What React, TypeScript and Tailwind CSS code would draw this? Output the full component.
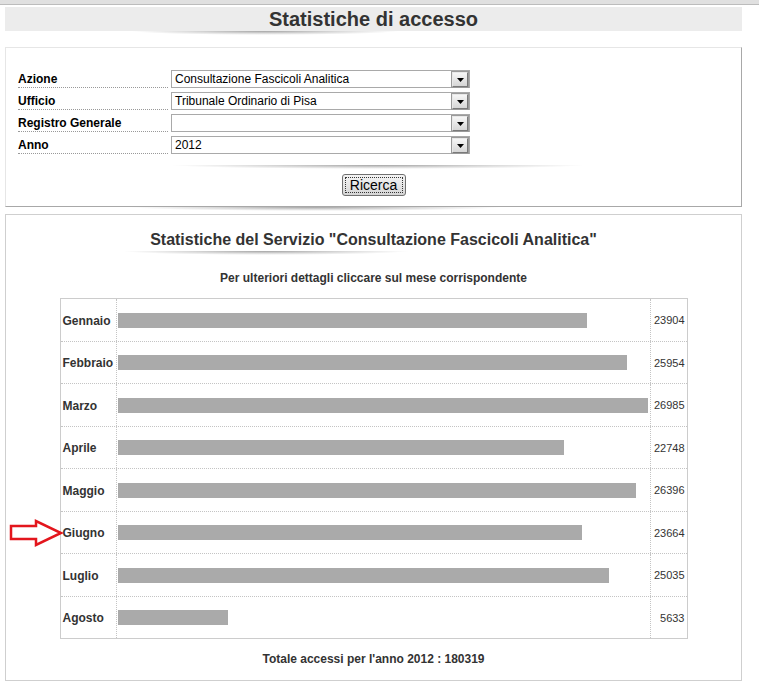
import React from "react";

const months = [
  { name: "Gennaio", value: 23904 },
  { name: "Febbraio", value: 25954 },
  { name: "Marzo", value: 26985 },
  { name: "Aprile", value: 22748 },
  { name: "Maggio", value: 26396 },
  { name: "Giugno", value: 23664 },
  { name: "Luglio", value: 25035 },
  { name: "Agosto", value: 5633 },
];

// row heights so the pitch matches the original table (~42.4px)
const rowHeights = ["h-[42px]", "h-[42px]", "h-[43px]", "h-[42px]", "h-[43px]", "h-[42px]", "h-[43px]", "h-[42px]"];

const maxValue = Math.max(...months.map((m) => m.value));
const total = months.reduce((s, m) => s + m.value, 0);

function Shadow({ className }: { className: string }) {
  return (
    <div
      className={
        "h-[4px] bg-[radial-gradient(ellipse_at_top,rgba(0,0,0,0.36)_0%,rgba(0,0,0,0.14)_40%,transparent_70%)] " +
        className
      }
    />
  );
}

function Select({ value }: { value: string }) {
  return (
    <div className="flex h-[18px] w-[299px] items-center border border-[#a9a9a9] bg-white">
      <span className="flex-1 pl-[3px] text-[12px] leading-none text-black">{value}</span>
      <span className="mr-px flex h-[15px] w-[16px] items-end justify-center border border-t-[#e8e8e8] border-l-[#e8e8e8] border-r-[#7a7a7a] border-b-[#7a7a7a] bg-[linear-gradient(#f6f6f6,#d6d6d6)] pb-[4px] outline outline-1 outline-[#9a9a9a]">
        <svg width="7" height="4" viewBox="0 0 7 4">
          <path d="M0 0H7L3.5 4Z" fill="#000" />
        </svg>
      </span>
    </div>
  );
}

function FormRow({ label, value }: { label: string; value: string }) {
  return (
    <div className="flex h-[22px] items-start">
      <div className="flex h-[18px] w-[150px] items-center border-b border-dotted border-[#999] pt-px text-[12px] font-bold text-black">
        {label}
      </div>
      <div className="ml-[3px]">
        <Select value={value} />
      </div>
    </div>
  );
}

export default function App() {
  return (
    <div className="min-h-[691px] w-[759px] bg-white font-['Liberation_Sans',Arial,sans-serif] text-[#333]">
      <div className="h-[5px] border-b border-[#bcbcbc] bg-[#e0e0e0]" />

      <div className="ml-[5px] w-[737px]">
        <div className="mt-[2px] flex h-[24px] items-center justify-center bg-[#ececec]">
          <h1 className="text-[20px] font-bold text-[#333]">Statistiche di accesso</h1>
        </div>
        <Shadow className="ml-[125px] w-[270px]" />

        {/* form */}
        <div className="mt-[12px] border border-t-[#e6e6e6] border-l-[#e6e6e6] border-r-[#a8a8a8] border-b-[#a8a8a8] pl-[12px] pt-[22px] pb-[10px]">
          <FormRow label="Azione" value="Consultazione Fascicoli Analitica" />
          <FormRow label="Ufficio" value="Tribunale Ordinario di Pisa" />
          <FormRow label="Registro Generale" value="" />
          <FormRow label="Anno" value="2012" />
          <Shadow className="ml-[150px] mt-[7px] w-[420px]" />
          <div className="mt-[5px] flex justify-center pr-[12px]">
            <button className="flex h-[22px] w-[64px] items-center justify-center rounded-[3px] border border-[#707070] bg-[linear-gradient(#f3f3f3,#e6e6e6_50%,#d5d5d5)] p-[2px]">
              <span className="flex h-full w-full items-center justify-center border border-dotted border-[#333] text-[14px] leading-none text-black">
                Ricerca
              </span>
            </button>
          </div>
        </div>
        <Shadow className="ml-[120px] w-[380px]" />

        {/* stats */}
        <div className="mt-[3px] border border-[#cfcfcf] pt-[15px] pb-[13px]">
          <h2 className="text-center text-[16px] leading-[20px] font-bold text-[#333]">
            Statistiche del Servizio "Consultazione Fascicoli Analitica"
          </h2>
          <Shadow className="ml-[115px] mt-px w-[290px]" />
          <p className="mt-[15px] text-center text-[12px] leading-[16px] font-bold text-[#333]">
            Per ulteriori dettagli cliccare sul mese corrispondente
          </p>

          <div className="mx-auto mt-[12px] w-[628px] border border-[#cccccc]">
            {months.map((m, i) => (
              <div
                key={m.name}
                className={
                  "flex items-stretch " +
                  rowHeights[i] +
                  (i > 0 ? " border-t border-dotted border-[#c4c4c4]" : "")
                }
              >
                <div className="relative flex w-[56px] items-center border-r border-dotted border-[#c4c4c4] pl-[2px] pt-px text-[12px] font-bold text-[#333]">
                  {m.name === "Giugno" && (
                    <svg
                      className="absolute left-[-53px] top-[7px]"
                      width="56"
                      height="28"
                      viewBox="0 0 56 28"
                    >
                      <path
                        d="M3 7H28V2L53 14L28 26V20H3Z"
                        fill="#fff"
                        stroke="#e3161d"
                        strokeWidth="2.5"
                        strokeLinejoin="miter"
                      />
                    </svg>
                  )}
                  {m.name}
                </div>
                <div className="flex flex-1 items-center pl-px">
                  <div
                    className="h-[15px] bg-[#aaaaaa]"
                    style={{ width: `${(m.value / maxValue) * 530}px` }}
                  />
                </div>
                <div className="flex w-[37px] items-center justify-end border-l border-dotted border-[#c4c4c4] pr-[2px] pt-px text-[11px] text-[#333]">
                  {m.value}
                </div>
              </div>
            ))}
          </div>

          <p className="mt-[12px] text-center text-[12px] leading-[16px] font-bold text-[#333]">
            Totale accessi per l'anno 2012 : {total}
          </p>
        </div>
      </div>
    </div>
  );
}
